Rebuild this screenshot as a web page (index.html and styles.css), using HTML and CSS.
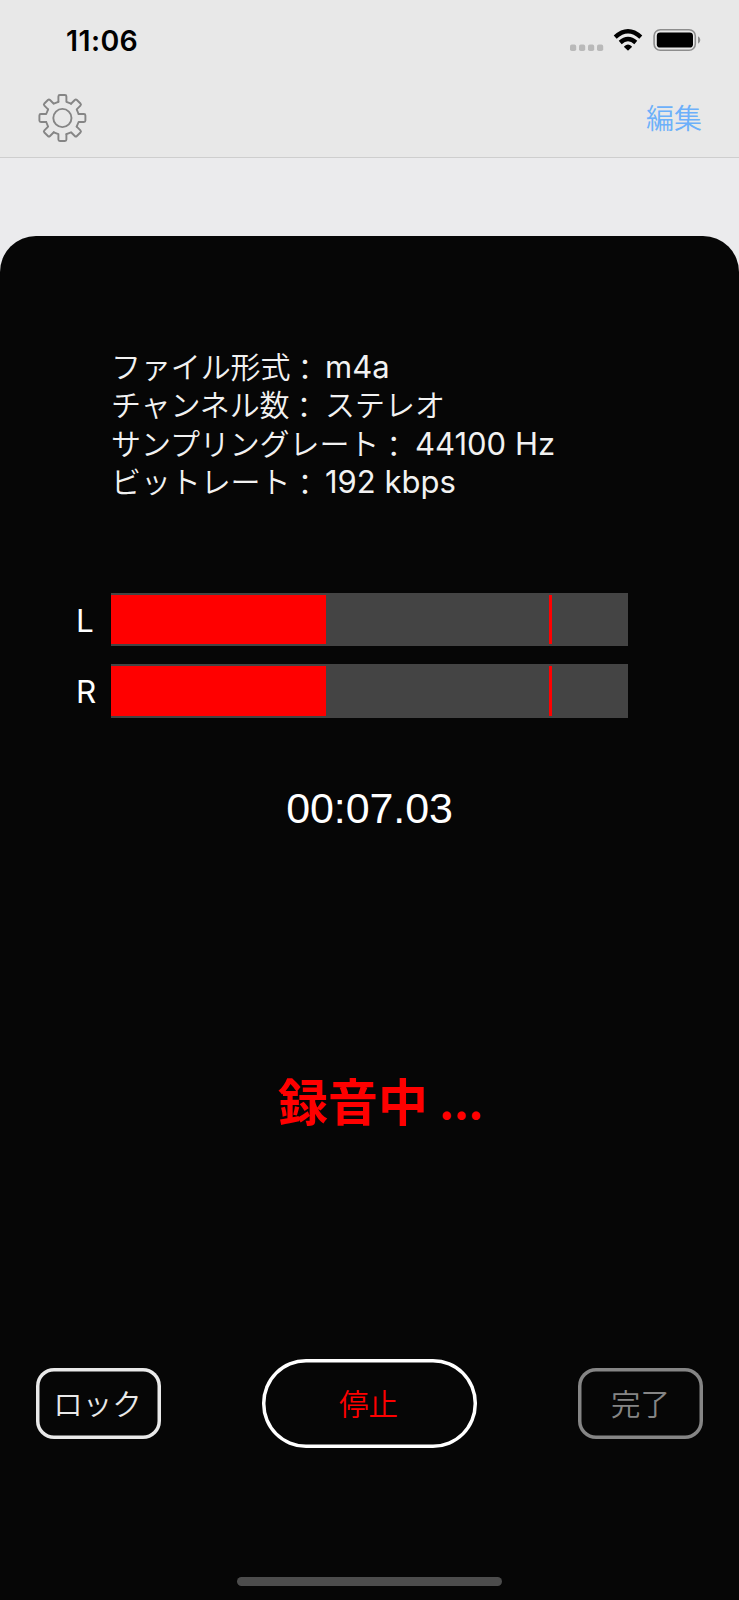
FILE: index.html
```html
<!DOCTYPE html>
<html lang="ja">
<head>
<meta charset="utf-8">
<title>録音</title>
<link rel="stylesheet" href="styles.css">
</head>
<body>
<header class="header">
  <div class="status">
    <span class="clock">11:06</span>
    <svg class="status-icons" width="132" height="24" viewBox="0 0 132 24">
      <g fill="#b9b9b9">
        <rect x="0" y="16.6" width="6.2" height="6.4" rx="1.8"/>
        <rect x="9" y="16.6" width="6.2" height="6.4" rx="1.8"/>
        <rect x="18" y="16.6" width="6.2" height="6.4" rx="1.8"/>
        <rect x="27" y="16.6" width="6.2" height="6.4" rx="1.8"/>
      </g>
      <g fill="none" stroke="#000" stroke-width="4.4">
        <path d="M45.2 9.1Q58 -2.5 70.8 9.1"/>
        <path d="M50.2 14.5Q58 7.6 65.8 14.5"/>
      </g>
      <path d="M54.3 18.2Q58 14.9 61.7 18.2Q62.2 18.7 61.7 19.2L58.5 22.3Q58 22.8 57.5 22.3L54.3 19.2Q53.8 18.7 54.3 18.2Z"/>
      <rect x="84.1" y="1.7" width="41.2" height="20.6" rx="6.2" fill="none" stroke="#8d8d8d" stroke-width="1.6"/>
      <rect x="86.8" y="4.4" width="36.2" height="15.2" rx="3.4"/>
      <path d="M128 8.2Q130.3 9.3 130.3 12Q130.3 14.7 128 15.8Z" fill="#8d8d8d"/>
    </svg>
  </div>
  <div class="nav">
    <svg class="gear" width="50" height="50" viewBox="-25.4 -25 50 50">
      <defs><path id="tooth" d="M-4-16.2V-21.5Q-4-23-2.5-23H2.5Q4-23 4-21.5V-16.2L8.63-14.28"/></defs>
      <g fill="none" stroke="#858585" stroke-width="1.9" stroke-linejoin="round" stroke-linecap="round">
        <use href="#tooth"/><use href="#tooth" transform="rotate(45)"/>
        <use href="#tooth" transform="rotate(90)"/><use href="#tooth" transform="rotate(135)"/>
        <use href="#tooth" transform="rotate(180)"/><use href="#tooth" transform="rotate(225)"/>
        <use href="#tooth" transform="rotate(270)"/><use href="#tooth" transform="rotate(315)"/>
        <circle r="9.1"/>
      </g>
    </svg>
    <span class="edit">編集</span>
  </div>
</header>
<main class="sheet">
  <div class="info">
    <div class="row"><span class="key">ファイル形式<span class="colon">：</span></span><span class="latin">m4a</span></div>
    <div class="row"><span class="key">チャンネル数<span class="colon">：</span></span><span class="kana">ステレオ</span></div>
    <div class="row"><span class="key">サンプリングレート<span class="colon">：</span></span><span class="latin">44100 Hz</span></div>
    <div class="row"><span class="key">ビットレート<span class="colon">：</span></span><span class="latin">192 kbps</span></div>
  </div>
  <div class="meters">
    <div class="meter"><span class="channel">L</span><div class="track"><div class="level"></div><div class="peak"></div></div></div>
    <div class="meter"><span class="channel">R</span><div class="track"><div class="level"></div><div class="peak"></div></div></div>
  </div>
  <div class="timer">00:07.03</div>
  <div class="recording">録音中 <span class="dots">...</span></div>
  <div class="actions">
    <button class="button lock">ロック</button>
    <button class="button stop">停止</button>
    <button class="button done">完了</button>
  </div>
  <div class="home"></div>
</main>
</body>
</html>
```

FILE: styles.css
```css
* { box-sizing: border-box; }
body {
  margin: 0;
  height: 1600px;
  display: flex;
  flex-direction: column;
  background: #ebebed;
  font-family: Inter, "Noto Sans CJK JP", sans-serif;
  white-space: nowrap;
}
.header {
  height: 158px;
  background: #e8e8e8;
  border-bottom: 1px solid #cecece;
}
.status {
  height: 80px;
  padding: 20px 37px 0 66px;
  display: flex;
  justify-content: space-between;
}
.clock {
  font-size: 28.5px;
  line-height: 41px;
  font-weight: 600;
  letter-spacing: 0.4px;
}
.status-icons { margin-top: 8px; }
.nav {
  height: 76px;
  padding: 0 37px;
  display: flex;
  justify-content: space-between;
  align-items: center;
}
.edit {
  padding-bottom: 2px;
  color: #6cb0fa;
  font: 350 28px/40px "Noto Sans CJK JP", sans-serif;
}
.sheet {
  margin-top: 78px;
  height: 1364px;
  border-radius: 36px 36px 0 0;
  background: #060606;
  color: #fff;
  display: flex;
  flex-direction: column;
}
.info {
  padding: 110px 0 0 111px;
  color: #f2f2f2;
}
.row {
  height: 38.3px;
  display: flex;
  align-items: baseline;
  line-height: 38px;
}
.key, .kana {
  font-family: "Noto Sans CJK JP", sans-serif;
  font-weight: 350;
  font-size: 30px;
}
.key { width: 214px; letter-spacing: -0.1px; }
.row:nth-child(3) .key { width: 304px; }
.colon { display: inline-block; transform: translate(-0.5px, 2px); }
.latin { font-size: 31px; }
.meters {
  margin-top: 93.8px;
  padding-left: 76px;
  display: flex;
  flex-direction: column;
  gap: 18px;
}
.meter {
  height: 53.4px;
  display: flex;
  align-items: center;
}
.channel {
  width: 34.6px;
  padding-top: 1px;
  font-size: 31.5px;
}
.track {
  width: 517.6px;
  height: 53.4px;
  padding: 2px 0;
  background: #444;
  display: flex;
}
.level { width: 215.5px; background: #f00; }
.peak { width: 3px; margin-left: 223px; background: #f00; }
.timer {
  margin-top: 63.6px;
  text-align: center;
  font: 43px/54px "Liberation Sans", sans-serif;
  letter-spacing: -0.1px;
}
.recording {
  height: 72px;
  margin: 228px 0 0 278px;
  color: #f00;
  font: 700 50px/72px "Noto Sans CJK JP", sans-serif;
}
.dots { font-size: 45px; line-height: 1; vertical-align: 2px; }
.actions {
  margin-top: 223.4px;
  padding: 0 36px;
  display: flex;
  align-items: center;
  justify-content: space-between;
}
.button {
  width: 125px;
  height: 71.5px;
  padding: 0 2px 2px 0;
  border: 0;
  border-radius: 18px;
  background: none;
  box-shadow: inset 0 0 0 3.5px currentColor;
  color: #e9e9e9;
  font: 350 29.5px/40px "Noto Sans CJK JP", sans-serif;
}
.stop {
  width: 215px;
  height: 89px;
  border-radius: 44px;
  box-shadow: inset 0 0 0 3.5px #fff;
  color: #f00;
}
.done { padding-right: 0; color: #858585; }
.home {
  width: 265px;
  height: 9px;
  margin: auto auto 14px;
  border-radius: 5px;
  background: #4c4c4c;
}
```
